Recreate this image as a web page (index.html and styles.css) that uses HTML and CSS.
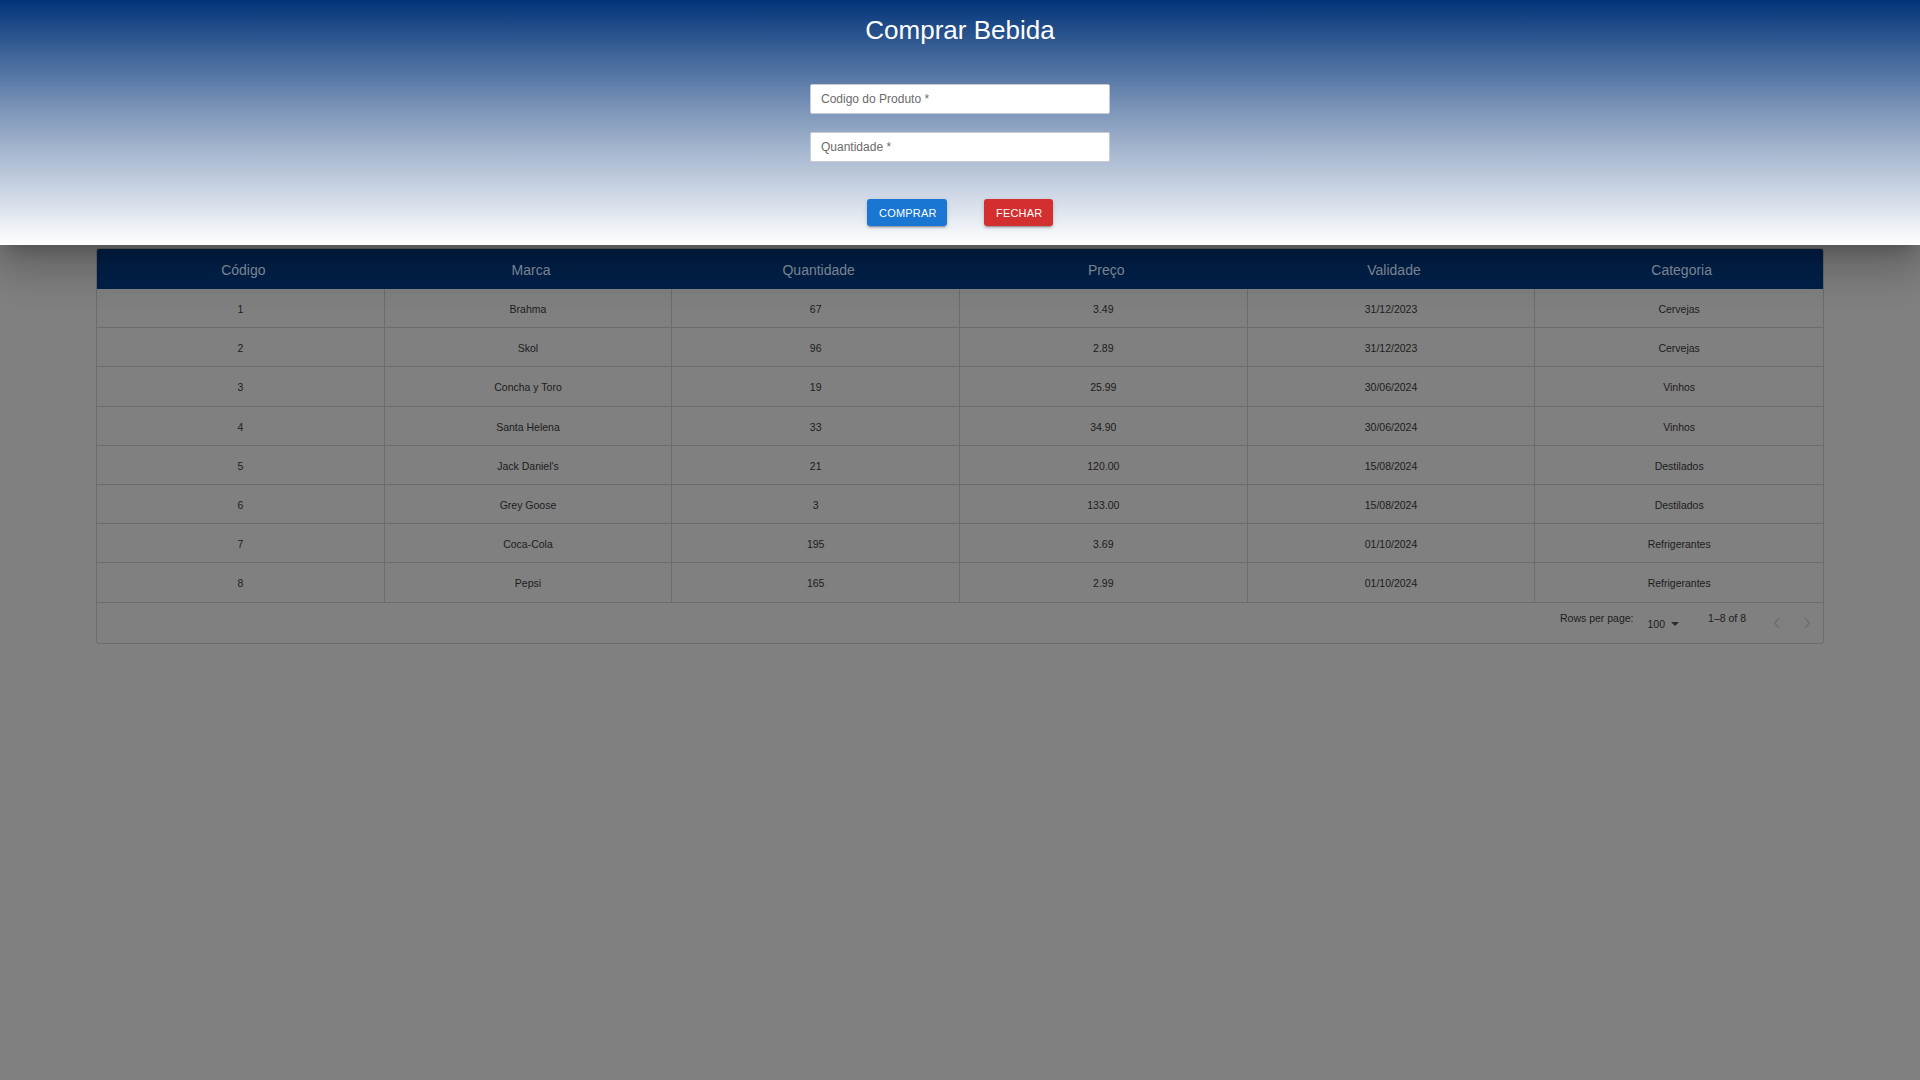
FILE: index.html
```html
<!DOCTYPE html>
<html lang="pt">
<head>
<meta charset="utf-8">
<title>Comprar Bebida</title>
<link rel="stylesheet" href="styles.css">
</head>
<body>
<main class="page">
  <div class="table-card">
    <div class="table-head">
      <div class="th">Código</div>
      <div class="th">Marca</div>
      <div class="th">Quantidade</div>
      <div class="th">Preço</div>
      <div class="th">Validade</div>
      <div class="th">Categoria</div>
    </div>
    <div class="tbody">
      <div class="tr"><div class="td">1</div><div class="td">Brahma</div><div class="td">67</div><div class="td">3.49</div><div class="td">31/12/2023</div><div class="td">Cervejas</div></div>
      <div class="tr"><div class="td">2</div><div class="td">Skol</div><div class="td">96</div><div class="td">2.89</div><div class="td">31/12/2023</div><div class="td">Cervejas</div></div>
      <div class="tr"><div class="td">3</div><div class="td">Concha y Toro</div><div class="td">19</div><div class="td">25.99</div><div class="td">30/06/2024</div><div class="td">Vinhos</div></div>
      <div class="tr"><div class="td">4</div><div class="td">Santa Helena</div><div class="td">33</div><div class="td">34.90</div><div class="td">30/06/2024</div><div class="td">Vinhos</div></div>
      <div class="tr"><div class="td">5</div><div class="td">Jack Daniel's</div><div class="td">21</div><div class="td">120.00</div><div class="td">15/08/2024</div><div class="td">Destilados</div></div>
      <div class="tr"><div class="td">6</div><div class="td">Grey Goose</div><div class="td">3</div><div class="td">133.00</div><div class="td">15/08/2024</div><div class="td">Destilados</div></div>
      <div class="tr"><div class="td">7</div><div class="td">Coca-Cola</div><div class="td">195</div><div class="td">3.69</div><div class="td">01/10/2024</div><div class="td">Refrigerantes</div></div>
      <div class="tr"><div class="td">8</div><div class="td">Pepsi</div><div class="td">165</div><div class="td">2.99</div><div class="td">01/10/2024</div><div class="td">Refrigerantes</div></div>
    </div>
    <div class="pagination">
      <span class="rpp-label">Rows per page:</span>
      <span class="rpp-select">100 <svg class="caret" width="8" height="4" viewBox="0 0 8 4"><path d="M0 0 L8 0 L4 4 Z" fill="#2a2a2a"/></svg></span>
      <span class="range">1–8 of 8</span>
      <span class="nav">
        <svg width="10" height="12" viewBox="0 0 10 12"><path d="M7 1 L2.5 6 L7 11" fill="none" stroke="#6d6d6d" stroke-width="1.3"/></svg>
        <svg width="10" height="12" viewBox="0 0 10 12"><path d="M3 1 L7.5 6 L3 11" fill="none" stroke="#6d6d6d" stroke-width="1.3"/></svg>
      </span>
    </div>
  </div>
</main>

<div class="dialog">
  <h1 class="title">Comprar Bebida</h1>
  <form class="form">
    <input class="field" type="text" placeholder="Codigo do Produto *">
    <input class="field" type="text" placeholder="Quantidade *">
    <div class="actions">
      <button type="button" class="btn btn-buy">COMPRAR</button>
      <button type="button" class="btn btn-close">FECHAR</button>
    </div>
  </form>
</div>
</body>
</html>
```

FILE: styles.css
```css
* { box-sizing: border-box; }

html, body {
  margin: 0;
  padding: 0;
  height: 100%;
}

body {
  background: #808080;
  font-family: "Liberation Sans", Arial, sans-serif;
  color: #1c1c1c;
  overflow: hidden;
}

.page {
  padding: 248px 96px 0 96px;
}

.table-card {
  border: 1px solid #6c6c6c;
  border-radius: 3px;
  overflow: hidden;
}

.table-head {
  display: grid;
  grid-template-columns: repeat(6, 1fr);
  height: 40px;
  background: #00214a;
}

.th {
  display: flex;
  align-items: center;
  justify-content: center;
  padding-left: 5px;
  padding-top: 2px;
  font-size: 14px;
  color: #8a94a4;
}

.tr {
  display: grid;
  grid-template-columns: repeat(6, 1fr);
  height: 39.2px;
  border-bottom: 1px solid #6c6c6c;
}

.td {
  display: flex;
  align-items: center;
  justify-content: center;
  font-size: 10.5px;
  color: #1c1c1c;
  border-right: 1px solid #6c6c6c;
  padding-top: 2px;
}

.td:last-child { border-right: none; }

.pagination {
  height: 40px;
  display: flex;
  justify-content: flex-end;
  align-items: flex-start;
  font-size: 10.5px;
  color: #1c1c1c;
  padding-right: 10px;
}

.rpp-label {
  margin-top: 9px;
}

.rpp-select {
  display: flex;
  align-items: center;
  gap: 4px;
  margin-top: 15px;
  margin-left: 14px;
}

.caret { margin-left: 2px; margin-top: 1px; }

.range {
  margin-top: 9px;
  margin-left: 29px;
}

.nav {
  display: flex;
  gap: 20px;
  margin-top: 14px;
  margin-left: 26px;
  margin-right: 1px;
}

.dialog {
  position: absolute;
  top: 0;
  left: 0;
  right: 0;
  height: 245px;
  background: linear-gradient(to bottom, #023479 0%, #8aa0c0 50%, #ffffff 100%);
  box-shadow: 0 11px 15px -7px rgba(0,0,0,0.2), 0 24px 38px 3px rgba(0,0,0,0.14), 0 9px 46px 8px rgba(0,0,0,0.12);
  display: flex;
  flex-direction: column;
  align-items: center;
  padding-top: 15px;
}

.title {
  margin: 0;
  font-size: 26px;
  line-height: 30px;
  font-weight: 400;
  color: #ffffff;
}

.form {
  margin-top: 39px;
  display: flex;
  flex-direction: column;
  align-items: center;
  gap: 18px;
}

.field {
  width: 300px;
  height: 30px;
  border: 1px solid #c8ccd2;
  border-radius: 2px;
  background: #ffffff;
  padding: 0 10px;
  font-family: "Liberation Sans", Arial, sans-serif;
  font-size: 12px;
  color: #333;
  outline: none;
}

.field::placeholder { color: #6b6b6b; }

.actions {
  margin-top: 19px;
  display: flex;
  gap: 37px;
}

.btn {
  height: 27px;
  border: none;
  border-radius: 3px;
  color: #ffffff;
  font-family: "Liberation Sans", Arial, sans-serif;
  font-size: 11px;
  letter-spacing: 0.2px;
  padding: 0 12px;
  box-shadow: 0 3px 1px -2px rgba(0,0,0,0.2), 0 2px 2px 0 rgba(0,0,0,0.14), 0 1px 5px 0 rgba(0,0,0,0.12);
  cursor: pointer;
}

.btn-buy { background: #1976d2; width: 80px; }
.btn-close { background: #d32f2f; width: 69px; }
```
